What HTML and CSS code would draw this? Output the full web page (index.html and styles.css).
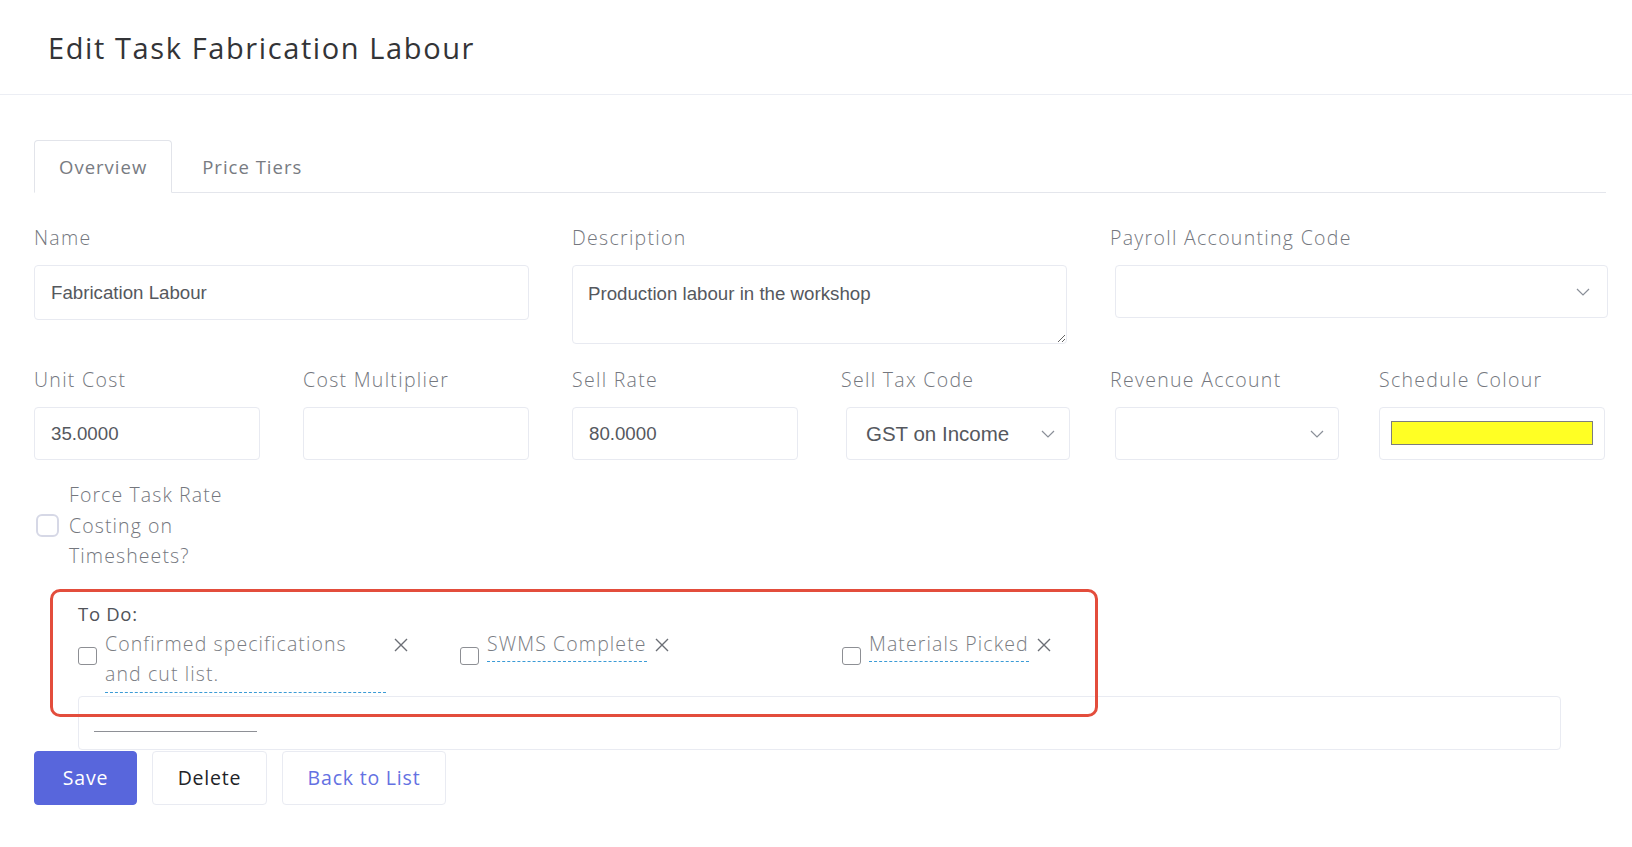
FILE: index.html
```html
<!DOCTYPE html>
<html lang="en">
<head>
<meta charset="utf-8">
<title>Edit Task Fabrication Labour</title>
<link rel="stylesheet" href="styles.css">
</head>
<body>
<header class="page-header">
  <h1 class="page-title">Edit Task Fabrication Labour</h1>
</header>
<main class="content">
  <nav class="tabs">
    <a class="tab tab-active">Overview</a>
    <a class="tab">Price Tiers</a>
  </nav>

  <div class="form-grid">
    <div class="field span-2">
      <label class="field-label">Name</label>
      <input class="text-input" type="text" value="Fabrication Labour">
    </div>
    <div class="field span-2">
      <label class="field-label">Description</label>
      <textarea class="text-area">Production labour in the workshop</textarea>
    </div>
    <div class="field span-2">
      <label class="field-label">Payroll Accounting Code</label>
      <div class="select-box select-wide">
        <span class="select-value"></span>
        <svg class="chevron" viewBox="0 0 14 8" width="14" height="8"><path d="M1 1l6 6 6-6" fill="none" stroke="#8a8f98" stroke-width="1.2"/></svg>
      </div>
    </div>

    <div class="field">
      <label class="field-label">Unit Cost</label>
      <input class="text-input short" type="text" value="35.0000">
    </div>
    <div class="field">
      <label class="field-label">Cost Multiplier</label>
      <input class="text-input short" type="text" value="">
    </div>
    <div class="field">
      <label class="field-label">Sell Rate</label>
      <input class="text-input short" type="text" value="80.0000">
    </div>
    <div class="field">
      <label class="field-label">Sell Tax Code</label>
      <div class="select-box">
        <span class="select-value">GST on Income</span>
        <svg class="chevron" viewBox="0 0 14 8" width="14" height="8"><path d="M1 1l6 6 6-6" fill="none" stroke="#8a8f98" stroke-width="1.2"/></svg>
      </div>
    </div>
    <div class="field">
      <label class="field-label">Revenue Account</label>
      <div class="select-box">
        <span class="select-value"></span>
        <svg class="chevron" viewBox="0 0 14 8" width="14" height="8"><path d="M1 1l6 6 6-6" fill="none" stroke="#8a8f98" stroke-width="1.2"/></svg>
      </div>
    </div>
    <div class="field">
      <label class="field-label">Schedule Colour</label>
      <div class="colour-box"><span class="colour-swatch"></span></div>
    </div>
  </div>

  <div class="check-field">
    <span class="check-round"></span>
    <span class="check-text">Force Task Rate Costing on Timesheets?</span>
  </div>

  <section class="todo">
    <div class="todo-title">To Do:</div>
    <div class="todo-items">
      <div class="todo-item">
        <span class="todo-box"></span>
        <span class="todo-text">Confirmed specifications and cut list.</span>
        <svg class="todo-x" viewBox="0 0 16 16" width="16" height="16"><path d="M2 2l12 12M14 2L2 14" stroke="#6b6e75" stroke-width="1.4"/></svg>
      </div>
      <div class="todo-item">
        <span class="todo-box"></span>
        <span class="todo-text">SWMS Complete</span>
        <svg class="todo-x" viewBox="0 0 16 16" width="16" height="16"><path d="M2 2l12 12M14 2L2 14" stroke="#6b6e75" stroke-width="1.4"/></svg>
      </div>
      <div class="todo-item">
        <span class="todo-box"></span>
        <span class="todo-text">Materials Picked</span>
        <svg class="todo-x" viewBox="0 0 16 16" width="16" height="16"><path d="M2 2l12 12M14 2L2 14" stroke="#6b6e75" stroke-width="1.4"/></svg>
      </div>
    </div>
    <div class="todo-new"><span class="todo-new-line"></span></div>
  </section>

  <div class="actions">
    <button class="btn btn-primary">Save</button>
    <button class="btn btn-plain">Delete</button>
    <button class="btn btn-link">Back to List</button>
  </div>

  <div class="highlight"></div>
</main>
</body>
</html>
```

FILE: styles.css
```css
* { box-sizing: border-box; }

body {
  margin: 0;
  background: #ffffff;
  font-family: "Open Sans", "Noto Sans", sans-serif;
  color: #6f7278;
}

.page-header {
  height: 95px;
  border-bottom: 1px solid #eceef4;
  display: flex;
  align-items: center;
  padding-left: 48px;
}

.page-title {
  margin: 0;
  font-size: 29px;
  font-weight: 500;
  color: #333437;
  letter-spacing: 1.6px;
}

.content {
  position: relative;
  padding: 45px 0 40px 34px;
}

.tabs {
  display: flex;
  width: 1572px;
  height: 53px;
  border-bottom: 1px solid #e4e6ec;
}

.tab {
  display: flex;
  align-items: center;
  padding: 0 24px;
  font-size: 18.5px;
  letter-spacing: 1px;
  color: #787b82;
  border: 1px solid transparent;
  border-radius: 4px 4px 0 0;
  margin-bottom: -1px;
  margin-right: 5px;
}

.tab-active {
  border-color: #e2e4ea;
  border-bottom-color: #ffffff;
  background: #ffffff;
}

.form-grid {
  display: grid;
  grid-template-columns: repeat(6, 226px);
  column-gap: 43px;
  row-gap: 23px;
  padding-top: 32px;
  align-items: start;
}

.span-2 { grid-column: span 2; }

.field { display: flex; flex-direction: column; }

.field-label {
  font-size: 19.5px;
  font-weight: 300;
  letter-spacing: 1.3px;
  line-height: 26px;
  color: #74777e;
  margin-bottom: 14px;
}

.text-input {
  height: 55px;
  border: 1px solid #e8eaf1;
  border-radius: 4px;
  padding: 0 16px;
  font-family: "Liberation Sans", Arial, sans-serif;
  font-size: 18.7px;
  color: #55585e;
  background: #fff;
  outline: none;
}

.text-input.short { height: 53px; }

.text-area {
  height: 79px;
  border: 1px solid #e8eaf1;
  border-radius: 4px;
  padding: 17px 15px;
  font-family: "Liberation Sans", Arial, sans-serif;
  font-size: 18.7px;
  color: #55585e;
  resize: vertical;
  outline: none;
}

.select-box {
  height: 53px;
  margin-left: 5px;
  width: calc(100% - 2px);
  border: 1px solid #e8eaf1;
  border-radius: 4px;
  display: flex;
  align-items: center;
  justify-content: space-between;
  padding: 0 14px 0 19px;
  font-family: "Liberation Sans", Arial, sans-serif;
  font-size: 20.5px;
  color: #55585e;
}

.select-wide { width: calc(100% - 2px); padding-right: 17px; }

.chevron { flex: none; }

.colour-box {
  height: 53px;
  border: 1px solid #e8eaf1;
  border-radius: 4px;
  padding: 13px 11px;
}

.colour-swatch {
  display: block;
  height: 24px;
  background: #ffff24;
  border: 1px solid #7d7d7d;
}

.check-field {
  display: flex;
  align-items: center;
  margin-top: 20px;
  margin-left: 2px;
}

.check-round {
  width: 23px;
  height: 23px;
  border: 2px solid #d6d8e6;
  border-radius: 6px;
  margin-right: 10px;
  flex: none;
}

.check-text {
  width: 190px;
  font-size: 19.5px;
  font-weight: 300;
  letter-spacing: 1.1px;
  line-height: 30.5px;
  color: #74777e;
}

.todo {
  margin: 29px 0 0 44px;
  width: 1483px;
}

.todo-title {
  font-size: 18.5px;
  letter-spacing: 0.7px;
  line-height: 26px;
  color: #505359;
}

.todo-items {
  display: grid;
  grid-template-columns: repeat(3, 382px);
  margin-top: 2px;
}

.todo-item {
  display: flex;
  align-items: flex-start;
}

.todo-box {
  width: 19px;
  height: 18px;
  border: 1.5px solid #8d8f94;
  border-radius: 3px;
  margin-top: 18px;
  margin-right: 8px;
  flex: none;
}

.todo-text {
  max-width: 281px;
  font-size: 19.5px;
  font-weight: 300;
  letter-spacing: 1.1px;
  line-height: 30.5px;
  color: #7a7d83;
  padding-bottom: 2px;
  border-bottom: 1.5px dashed #3b9bd6;
}

.todo-x {
  flex: none;
  margin: 8px 0 0 7px;
}

.todo-new {
  margin-top: 3px;
  height: 54px;
  border: 1px solid #e9ebf2;
  border-radius: 4px;
  padding: 34px 0 0 15px;
}

.todo-new-line {
  display: block;
  width: 163px;
  border-bottom: 1px solid #8e9096;
}

.actions {
  display: flex;
  gap: 15px;
  margin-top: 1px;
}

.btn {
  height: 54px;
  border-radius: 4px;
  font-family: "Open Sans", "Noto Sans", sans-serif;
  font-size: 19.5px;
  letter-spacing: 0.8px;
  background: #fff;
  border: 1px solid #e9ebf2;
  padding: 0;
  cursor: pointer;
}

.btn-primary {
  background: #5866dc;
  border-color: #5866dc;
  color: #ffffff;
  width: 103px;
}

.btn-plain { color: #222327; width: 115px; }

.btn-link { color: #6471e2; width: 164px; }

.highlight {
  position: absolute;
  left: 50px;
  top: 494px;
  width: 1048px;
  height: 128px;
  border: 3.5px solid #e34d3c;
  border-radius: 10px;
  pointer-events: none;
}
```
